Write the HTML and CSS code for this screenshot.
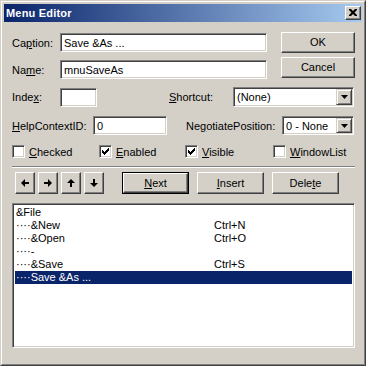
FILE: index.html
```html
<!DOCTYPE html>
<html>
<head>
<meta charset="utf-8">
<title>Menu Editor</title>
<link rel="stylesheet" href="styles.css">
</head>
<body>
<div class="window">
  <div class="frame">
    <div class="titlebar">
      <span class="title">Menu Editor</span>
      <span class="close"><svg width="8" height="7" viewBox="0 0 8 7"><path d="M0 0h2l2 2 2-2h2v1l-2.5 2.5L8 6v1H6L4 5 2 7H0V6l2.5-2.5L0 1z" fill="#000"/></svg></span>
    </div>
    <div class="content">
      <div class="top">
        <div class="fields">
          <div class="row">
            <span class="lbl w48">Ca<u>p</u>tion:</span>
            <div class="field f-caption">Save &amp;As ...</div>
          </div>
          <div class="row mt8">
            <span class="lbl w48">Na<u>m</u>e:</span>
            <div class="field f-caption">mnuSaveAs</div>
          </div>
        </div>
        <div class="btncol">
          <div class="btn b-ok">OK</div>
          <div class="btn b-ok">Cancel</div>
        </div>
      </div>

      <div class="row r-index">
        <span class="lbl w48">Inde<u>x</u>:</span>
        <div class="field f-index"></div>
        <span class="lbl l-shortcut"><u>S</u>hortcut:</span>
        <div class="combo c-shortcut">
          <span class="ctext">(None)</span>
          <span class="dd"><svg width="7" height="4" viewBox="0 0 7 4"><path d="M0 0h7L3.5 4z" fill="#000"/></svg></span>
        </div>
      </div>

      <div class="row r-help">
        <span class="lbl l-help"><u>H</u>elpContextID:</span>
        <div class="field f-help">0</div>
        <span class="lbl l-neg">Ne<u>g</u>otiatePosition:</span>
        <div class="combo c-neg">
          <span class="ctext">0 - None</span>
          <span class="dd"><svg width="7" height="4" viewBox="0 0 7 4"><path d="M0 0h7L3.5 4z" fill="#000"/></svg></span>
        </div>
      </div>

      <div class="checks">
        <div class="chk"><span class="box"></span><span><u>C</u>hecked</span></div>
        <div class="chk"><span class="box"><svg width="11" height="11" viewBox="1 1 11 11"><path d="M3 5h1v1h1v1h1v-1h1v-1h1v-1h1v-1h1v3h-1v1h-1v1h-1v1h-1v1h-1v-1h-1v-1h-1z" fill="#000"/></svg></span><span><u>E</u>nabled</span></div>
        <div class="chk"><span class="box"><svg width="11" height="11" viewBox="1 1 11 11"><path d="M3 5h1v1h1v1h1v-1h1v-1h1v-1h1v-1h1v3h-1v1h-1v1h-1v1h-1v1h-1v-1h-1v-1h-1z" fill="#000"/></svg></span><span><u>V</u>isible</span></div>
        <div class="chk"><span class="box"></span><span><u>W</u>indowList</span></div>
      </div>

      <div class="sep"></div>

      <div class="btnrow">
        <div class="arrows">
          <div class="btn arr"><svg width="8" height="8" viewBox="0 0 8 8"><path d="M0 4L4 0v3h4v2H4v3z" fill="#000"/></svg></div>
          <div class="btn arr"><svg width="8" height="8" viewBox="0 0 8 8"><path d="M8 4L4 0v3H0v2h4v3z" fill="#000"/></svg></div>
          <div class="btn arr"><svg width="8" height="8" viewBox="0 0 8 8"><path d="M4 0L0 4h3v4h2V4h3z" fill="#000"/></svg></div>
          <div class="btn arr"><svg width="8" height="8" viewBox="0 0 8 8"><path d="M4 8L0 4h3V0h2v4h3z" fill="#000"/></svg></div>
        </div>
        <div class="btn b-act b-default"><span><u>N</u>ext</span></div>
        <div class="btn b-act"><u>I</u>nsert</div>
        <div class="btn b-act">Dele<u>t</u>e</div>
      </div>

      <div class="list">
        <div class="item"><span class="cap">&amp;File</span><span class="key"></span></div>
        <div class="item"><span class="cap">····&amp;New</span><span class="key">Ctrl+N</span></div>
        <div class="item"><span class="cap">····&amp;Open</span><span class="key">Ctrl+O</span></div>
        <div class="item"><span class="cap">····-</span><span class="key"></span></div>
        <div class="item"><span class="cap">····&amp;Save</span><span class="key">Ctrl+S</span></div>
        <div class="item sel"><span class="cap">····Save &amp;As ...</span><span class="key"></span></div>
      </div>
    </div>
  </div>
</div>
</body>
</html>
```

FILE: styles.css
```css
html, body {
  margin: 0;
  padding: 0;
}
body {
  width: 366px;
  height: 366px;
  overflow: hidden;
  background: #d4d0c8;
  font: 11px "Liberation Sans", Arial, sans-serif;
  color: #000;
}
u {
  text-decoration: underline;
  text-underline-offset: 1px;
}
.window {
  box-sizing: border-box;
  width: 366px;
  height: 366px;
  background: #d4d0c8;
  border: 1px solid;
  border-color: #d4d0c8 #404040 #404040 #d4d0c8;
}
.frame {
  box-sizing: border-box;
  height: 100%;
  border: 1px solid;
  border-color: #fff #808080 #808080 #fff;
  padding: 2px;
  display: flex;
  flex-direction: column;
}
.titlebar {
  height: 18px;
  flex: none;
  background: linear-gradient(to right, #0a246a, #a6caf0);
  display: flex;
  align-items: center;
  padding: 0 1px 0 2px;
  color: #fff;
}
.title {
  font-weight: bold;
  font-size: 11px;
  letter-spacing: 0.2px;
}
.close {
  margin-left: auto;
  box-sizing: border-box;
  width: 16px;
  height: 14px;
  background: #d4d0c8;
  border: 1px solid;
  border-color: #fff #404040 #404040 #fff;
  box-shadow: inset -1px -1px #808080;
  display: flex;
  align-items: center;
  justify-content: center;
  padding: 0 1px 1px 0;
}
.close svg { display: block; }
.content {
  padding: 8px 7px 0 8px;
  display: flex;
  flex-direction: column;
}
.top {
  display: flex;
}
.fields {
  margin-top: 3px;
  display: flex;
  flex-direction: column;
}
.row {
  display: flex;
  align-items: center;
}
.mt8 { margin-top: 8px; }
.lbl {
  white-space: nowrap;
}
.w48 { width: 48px; flex: none; }
.field {
  box-sizing: border-box;
  height: 19px;
  background: #fff;
  border: 1px solid;
  border-color: #808080 #fff #fff #808080;
  box-shadow: inset 1px 1px #404040, inset -1px -1px #d4d0c8;
  padding: 0 3px;
  display: flex;
  align-items: center;
  flex: none;
}
.f-caption { width: 207px; }
.btncol {
  margin-left: auto;
  margin-top: 2px;
  width: 74px;
  display: flex;
  flex-direction: column;
  gap: 4px;
}
.btn {
  box-sizing: border-box;
  background: #d4d0c8;
  border: 1px solid;
  border-color: #fff #404040 #404040 #fff;
  box-shadow: inset -1px -1px #808080;
  display: flex;
  align-items: center;
  justify-content: center;
  flex: none;
}
.b-ok {
  height: 21px;
  padding-bottom: 1px;
}
.r-index {
  margin-top: 8px;
}
.f-index { width: 37px; }
.l-shortcut {
  margin-left: 72px;
  width: 64px;
}
.combo {
  box-sizing: border-box;
  height: 20px;
  background: #fff;
  border: 1px solid;
  border-color: #808080 #fff #fff #808080;
  box-shadow: inset 1px 1px #404040, inset -1px -1px #d4d0c8;
  padding: 1px;
  display: flex;
  align-items: center;
  flex: none;
}
.ctext {
  padding-left: 2px;
  flex: 1;
}
.dd {
  box-sizing: border-box;
  width: 16px;
  height: 16px;
  background: #d4d0c8;
  border: 1px solid;
  border-color: #d4d0c8 #404040 #404040 #d4d0c8;
  box-shadow: inset 1px 1px #fff, inset -1px -1px #808080;
  display: flex;
  align-items: center;
  justify-content: center;
}
.dd svg { display: block; }
.c-shortcut { width: 121px; }
.r-help { margin-top: 9px; }
.l-help { width: 81px; flex: none; }
.f-help { width: 74px; }
.l-neg { margin-left: 19px; width: 96px; }
.c-neg { width: 72px; height: 19px; }
.c-neg .dd { height: 15px; }
.checks {
  margin-top: 10px;
  display: grid;
  grid-template-columns: 87px 86px 88px auto;
  height: 13px;
}
.chk {
  display: flex;
  align-items: center;
  gap: 4px;
}
.box {
  box-sizing: border-box;
  width: 13px;
  height: 13px;
  background: #fff;
  border: 1px solid;
  border-color: #808080 #fff #fff #808080;
  box-shadow: inset 1px 1px #404040, inset -1px -1px #d4d0c8;
  flex: none;
}
.box svg { display: block; }
.sep {
  margin-top: 8px;
  height: 0;
  border-top: 1px solid #808080;
  border-bottom: 1px solid #fff;
}
.btnrow {
  margin-top: 4px;
  display: flex;
  height: 22px;
}
.arrows {
  display: flex;
  gap: 3px;
  margin-left: 3px;
}
.arr {
  width: 20px;
  height: 22px;
}
.arr svg { display: block; }
.b-act {
  width: 67px;
  height: 22px;
  margin-left: 8px;
  padding-bottom: 1px;
}
.b-default {
  margin-left: 18px;
  border: 1px solid #000;
  box-shadow: none;
  padding: 0;
}
.b-default span {
  box-sizing: border-box;
  width: 100%;
  height: 100%;
  border: 1px solid;
  border-color: #fff #404040 #404040 #fff;
  box-shadow: inset -1px -1px #808080;
  display: flex;
  align-items: center;
  justify-content: center;
  padding-bottom: 1px;
}
.list {
  margin-top: 9px;
  box-sizing: border-box;
  height: 145px;
  background: #fff;
  border: 1px solid;
  border-color: #808080 #fff #fff #808080;
  box-shadow: inset 1px 1px #404040, inset -1px -1px #d4d0c8;
  padding: 2px 2px 2px 2px;
}
.item {
  display: flex;
  height: 13px;
  line-height: 13px;
  white-space: nowrap;
}
.cap {
  width: 198px;
  padding-left: 1px;
}
.sel {
  background: #0a246a;
  color: #fff;
}
```
